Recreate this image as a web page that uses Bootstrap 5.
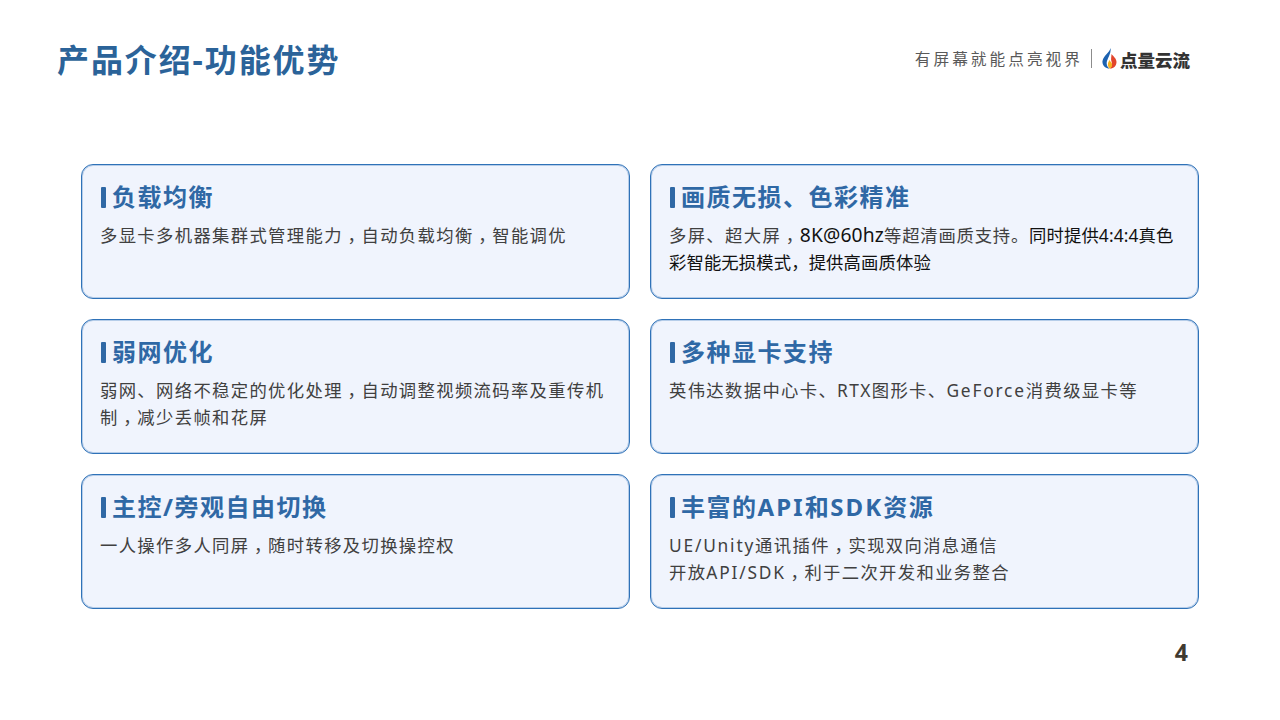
<!DOCTYPE html>
<html lang="zh-CN">
<head>
<meta charset="utf-8">
<title>产品介绍-功能优势</title>
<link href="https://cdn.jsdelivr.net/npm/bootstrap@5.3.0/dist/css/bootstrap.min.css" rel="stylesheet">
<style>
html,body{margin:0;width:1280px;height:720px;overflow:hidden;background:#fff}
body{font-family:"Noto Sans","Noto Sans CJK SC",sans-serif;color:#404040}
.slide{width:1280px;height:720px;padding:37px 81px 0 81px;display:flex;flex-direction:column}
.top-bar{height:46px;margin-left:-24px;margin-right:9px}
.page-title{font-size:32px;line-height:46px;font-weight:700;color:#2b6399;margin:0;letter-spacing:1.9px}
.brand-group{margin-bottom:3px}
.slogan{font-size:15.7px;letter-spacing:3px;color:#595959;line-height:20px}
.sep{width:1px;height:19px;background:#8c8c8c;margin:0 10px 0 8px}
.brand-name{font-size:17.5px;font-weight:900;color:#333;line-height:20px;margin:2px 0 0 3px;letter-spacing:0}
.feature-grid{display:grid;grid-template-columns:549px 549px;grid-auto-rows:135px;gap:20px;margin-top:81px}
.feature-box{background:#f0f4fd;border:1px solid #2f72b8;box-shadow:inset 0 0 0 1px rgba(74,133,194,.35);border-radius:12px;padding:15px 18px 0 18px}
.feature-title{font-size:24px;line-height:34px;font-weight:700;color:#2f68a5;margin:0 0 8px 1px;display:flex;align-items:center;letter-spacing:1.5px}
.feature-title::before{content:"";width:5px;height:21px;background:#2f68a5;border-radius:1px;margin-right:6px;flex:none}
.title-latin{letter-spacing:2.1px}
.feature-text{font-size:17.33px;line-height:27px;letter-spacing:1.35px;margin:0}
.text-latin{letter-spacing:1.8px}
.ink{color:#111;letter-spacing:.13px}
.ink-wide{font-size:19.3px;line-height:1}
.tight-run{letter-spacing:.8px}
.cm{padding-left:.27em;letter-spacing:calc(1.35px - .27em)}
.page-num{font-size:23px;font-weight:700;line-height:28px;color:#403a30;margin:29px 11px 0 0;text-align:right}
</style>
</head>
<body>
<div class="slide">
  <div class="top-bar d-flex align-items-center justify-content-between">
    <h1 class="page-title">产品介绍-功能优势</h1>
    <div class="brand-group d-flex align-items-center">
      <span class="slogan">有屏幕就能点亮视界</span>
      <span class="sep"></span>
      <svg width="15" height="21" viewBox="0 0 15 21">
        <path d="M8.500 0C8 4 1.500 7.500.5 13c-.6 4 3 7.500 7 7.500-2-1.500-3.500-4-2.500-7.500C6 9.500 9.500 5 8.500 0z" fill="#1c62b0"/>
        <path d="M9.500 6c0 3-1 5 0 7.500 1 2.500.5 5-2 7 4 .3 7-2.500 7-6.500 0-3.500-3-5.500-5-8z" fill="#e2452c"/>
        <path d="M7.500 12C6 14.500 4.700 17 7.500 20.500c2.500-1 3.200-3.500 2.200-5.500-.8-1-1.800-2-2.200-3z" fill="#f6b21f"/>
      </svg>
      <span class="brand-name">点量云流</span>
    </div>
  </div>
  <div class="feature-grid">
    <section class="feature-box"><h2 class="feature-title">负载均衡</h2><p class="feature-text">多显卡多机器集群式管理能力<span class="cm">，</span>自动负载均衡<span class="cm">，</span>智能调优</p></section>
    <section class="feature-box"><h2 class="feature-title">画质无损、色彩精准</h2><p class="feature-text">多屏、超大屏<span class="cm">，</span><span class="ink ink-wide">8K@60hz</span><span class="tight-run">等超清画质支持。</span><span class="ink">同时提供4:4:4真色<br>彩智能无损模式，提供高画质体验</span></p></section>
    <section class="feature-box"><h2 class="feature-title">弱网优化</h2><p class="feature-text">弱网、网络不稳定的优化处理<span class="cm">，</span>自动调整视频流码率及重传机<br>制<span class="cm">，</span>减少丢帧和花屏</p></section>
    <section class="feature-box"><h2 class="feature-title">多种显卡支持</h2><p class="feature-text">英伟达数据中心卡、RTX图形卡、<span class="text-latin">GeForce</span>消费级显卡等</p></section>
    <section class="feature-box"><h2 class="feature-title">主控/旁观自由切换</h2><p class="feature-text">一人操作多人同屏<span class="cm">，</span>随时转移及切换操控权</p></section>
    <section class="feature-box"><h2 class="feature-title"><span>丰富的<span class="title-latin">API</span>和<span class="title-latin">SDK</span>资源</span></h2><p class="feature-text"><span class="text-latin">UE/Unity</span>通讯插件<span class="cm">，</span>实现双向消息通信<br>开放<span class="text-latin">API/SDK</span><span class="cm">，</span>利于二次开发和业务整合</p></section>
  </div>
  <p class="page-num">4</p>
</div>
<script src="https://cdn.jsdelivr.net/npm/bootstrap@5.3.0/dist/js/bootstrap.bundle.min.js"></script>
</body>
</html>
